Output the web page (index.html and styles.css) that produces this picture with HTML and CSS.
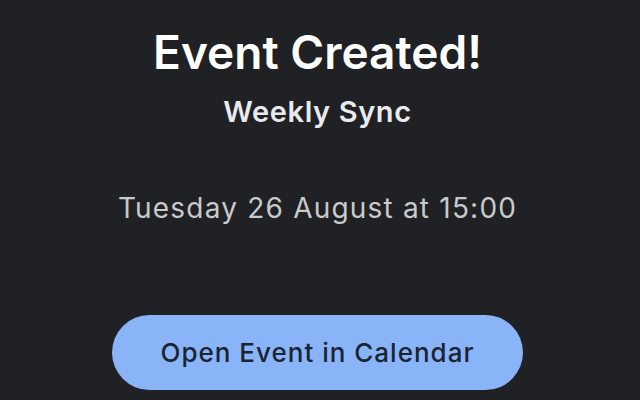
FILE: index.html
```html
<!DOCTYPE html>
<html>
<head>
<meta charset="utf-8">
<link rel="stylesheet" href="styles.css">
</head>
<body>
<main class="screen">
  <h1 class="title">Event Created!</h1>
  <h2 class="subtitle">Weekly Sync</h2>
  <p class="when">Tuesday 26 August at 15:00</p>
  <button class="open-btn">Open Event in Calendar</button>
</main>
</body>
</html>
```

FILE: styles.css
```css
html, body {
  margin: 0;
  padding: 0;
  background: #202124;
  height: 100%;
  overflow: hidden;
}
.screen {
  display: flex;
  flex-direction: column;
  align-items: center;
  font-family: "Inter", "Noto Sans", sans-serif;
  padding-top: 22px;
  padding-right: 5px;
}
.title {
  margin: 0;
  font-size: 46px;
  font-weight: 600;
  line-height: 60px;
  color: #ffffff;
  letter-spacing: 0;
}
.subtitle {
  margin: 10px 0 0;
  font-size: 29px;
  font-weight: 600;
  line-height: 40px;
  color: #e8eaed;
  letter-spacing: 0.6px;
}
.when {
  margin: 56px 0 0;
  font-size: 28px;
  font-weight: 400;
  line-height: 40px;
  color: #c8cacb;
  letter-spacing: 1.2px;
}
.open-btn {
  margin-top: 87px;
  width: 411px;
  height: 75px;
  border: none;
  border-radius: 38px;
  background: #8ab4f8;
  color: #1a2433;
  font-family: "Inter", "Noto Sans", sans-serif;
  font-size: 26px;
  font-weight: 500;
  letter-spacing: 1px;
  padding: 0;
}
```
